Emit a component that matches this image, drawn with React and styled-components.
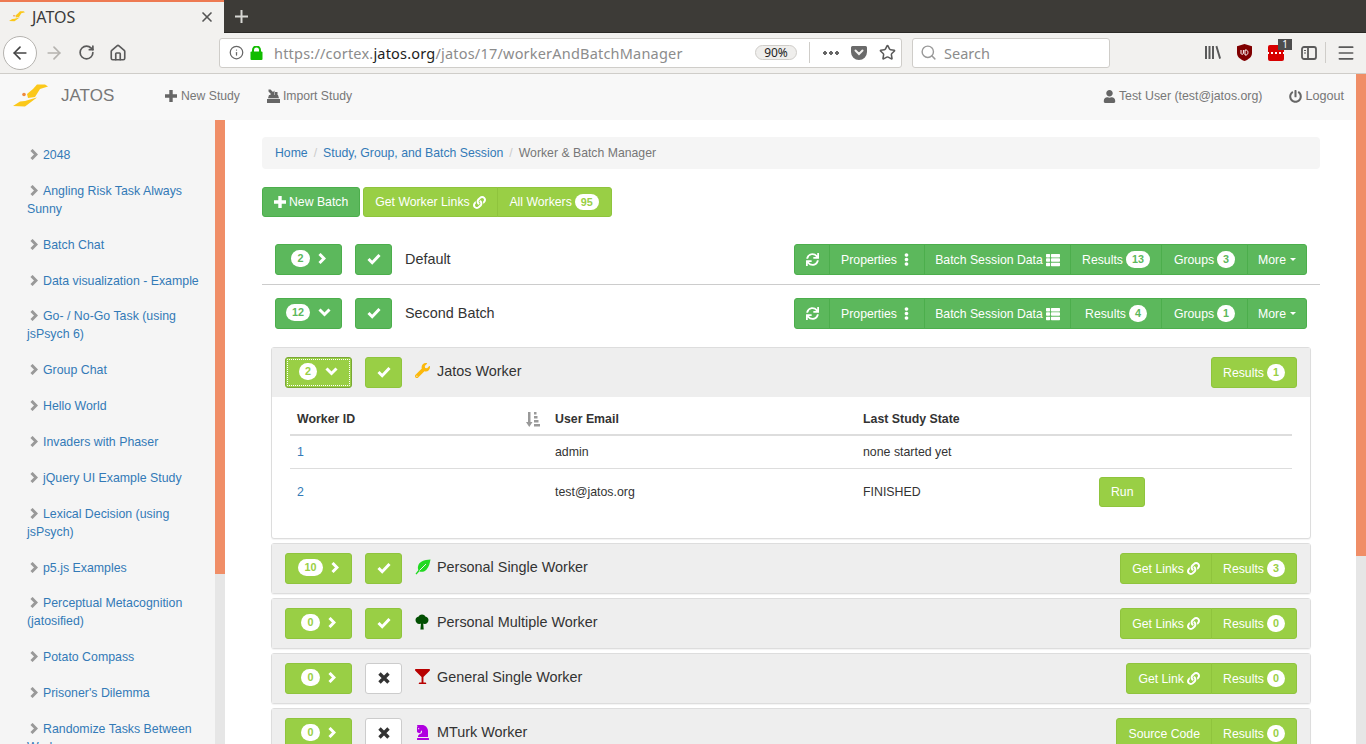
import React from 'react';
import styled, { createGlobalStyle } from 'styled-components';
import { FaLink, FaSync, FaEllipsisV, FaThList, FaWrench, FaGlassMartini, FaChessKnight, FaUser, FaPowerOff } from 'react-icons/fa';
import { ArrowLeft, ArrowRight, RotateCw, House, Info, Star, Search, X, Menu } from 'lucide-react';

const GREEN = '#5cb85c';
const LIME = '#99cf45';

const GlobalStyle = createGlobalStyle`
  html, body { margin: 0; padding: 0; height: 100%; overflow: hidden; }
  body { font-family: "Liberation Sans", Arial, sans-serif; font-size: 12.35px; color: #333; background: #fff; }
  * { box-sizing: border-box; }
`;

const studies = [
  '2048', 'Angling Risk Task Always Sunny', 'Batch Chat', 'Data visualization - Example',
  'Go- / No-Go Task (using jsPsych 6)', 'Group Chat', 'Hello World', 'Invaders with Phaser',
  'jQuery UI Example Study', 'Lexical Decision (using jsPsych)', 'p5.js Examples',
  'Perceptual Metacognition (jatosified)', 'Potato Compass', "Prisoner's Dilemma",
  'Randomize Tasks Between Workers',
];

function Logo({ size = 35 }) {
  return (
    <svg width={size} height={size * 0.66} viewBox="0 0 35 23">
      <path d="M0 22 L7 17.500 L12 17 L22 14 L24 13.500 L12 22.500 Z" fill="#fbc81a" />
      <path d="M14 10 L20 5 L24 .5 L32 .5 L35 2.500 L27 5 L22 13 L15 14 Z" fill="#fbc81a" />
      <circle cx="11" cy="10.500" r="1.800" fill="#ef8a3c" />
    </svg>
  );
}

function ChevronRight({ color = 'currentColor' }) {
  return (
    <svg width="8" height="11" viewBox="0 0 8 11" fill="none" stroke={color} strokeWidth="3">
      <path d="M1.500 1 6 5.500 1.500 10" />
    </svg>
  );
}

function ChevronDown() {
  return (
    <svg width="13" height="9" viewBox="0 0 13 9" fill="none" stroke="currentColor" strokeWidth="3">
      <path d="M1.500 1.500 6.500 6.500 11.500 1.500" />
    </svg>
  );
}

function CheckMark() {
  return (
    <svg width="14" height="12" viewBox="0 0 14 12" fill="none" stroke="currentColor" strokeWidth="3">
      <path d="M1.500 6 5.200 9.700 12.500 2" />
    </svg>
  );
}

function CrossMark() {
  return (
    <svg width="12" height="12" viewBox="0 0 12 12" fill="none" stroke="currentColor" strokeWidth="3.400">
      <path d="M1.500 1.500 10.500 10.500M10.500 1.500 1.500 10.500" />
    </svg>
  );
}

function PlusMark({ size = 12 }) {
  return (
    <svg width={size} height={size} viewBox="0 0 12 12" fill="currentColor">
      <path d="M4.300 0h3.400v4.300H12v3.400H7.700V12H4.300V7.700H0V4.300h4.300z" />
    </svg>
  );
}

function TreeIcon() {
  return (
    <svg width="14" height="16" viewBox="0 0 14 16">
      <path d="M6 9h2.200l.5 6.500H5.400z" fill="#024f02" />
      <path d="M7 .5c2 0 3 1 3.300 2 1.900.3 3.200 1.700 3.200 3.500 0 2.200-1.600 4-3.800 4-.9 0-1.900-.4-2.700-1-.8.6-1.800 1-2.700 1C2.100 10 .5 8.200.5 6c0-1.800 1.300-3.200 3.200-3.500C4 1.500 5 .5 7 .5z" fill="#024f02" />
    </svg>
  );
}

function LeafIcon() {
  return (
    <svg width="16" height="16" viewBox="0 0 16 16">
      <path d="M15.500 .5C9 1 4 2.500 3 7.500c-.3 1.500 0 2.800.4 3.600L.5 14.800l1 .8 2.900-3.400c1.500 1 4.500 1 7-1.500 2.800-2.800 3.500-7 4.100-10.200z" fill="#22d922" />
      <path d="M4.500 11.500 11 5" stroke="#eee" strokeWidth="1" fill="none" />
    </svg>
  );
}

function ImportIcon() {
  return (
    <svg width="13" height="14" viewBox="0 0 13 14" fill="#666">
      <path d="M0 10h13v4H0z" />
      <path d="M2 6h9l1 3.200H1z" />
      <path d="M1.500 .5l2 0 2.500 2.500 1.500-1.500v5h-5l1.500-1.500L1.500 2.500z" />
      <path d="M8 3h2.500v3H8z" />
    </svg>
  );
}

function SortBarsIcon() {
  return (
    <svg width="14" height="15" viewBox="0 0 14 15" fill="#999">
      <path d="M2 0h2.500v10H6.500L3.250 15 0 10h2z" />
      <path d="M8 0h2.500v2.500H8zM8 4h3.500v2.500H8zM8 8h4.500v2.500H8zM8 12h6v2.500H8z" />
    </svg>
  );
}

function LockIcon() {
  return (
    <svg width="13" height="14" viewBox="0 0 13 14">
      <path d="M3 6V4a3.500 3.500 0 0 1 7 0v2" fill="none" stroke="#12bc00" strokeWidth="2" />
      <rect x="0.500" y="5.500" width="12" height="8.500" rx="1" fill="#12bc00" />
    </svg>
  );
}

function PocketIcon() {
  return (
    <svg width="16" height="15" viewBox="0 0 16 15">
      <path d="M1.500 1h13A1.500 1.500 0 0 1 16 2.500V7a8 8 0 0 1-16 0V2.500A1.500 1.500 0 0 1 1.500 1z" fill="#6a6a6a" />
      <path d="M4.500 5.500 8 9l3.500-3.500" fill="none" stroke="#f2f1ef" strokeWidth="2" strokeLinecap="round" />
    </svg>
  );
}

function LibraryIcon() {
  return (
    <svg width="16" height="15" viewBox="0 0 16 15" fill="#5a5a5a">
      <path d="M0 1h2v13H0zM3.500 1h2v13h-2zM7 1h2v13H7zM10.500 1.500l1.800-.7 3.700 12.500-1.800.7z" />
    </svg>
  );
}

function ShieldIcon() {
  return (
    <svg width="15" height="17" viewBox="0 0 15 17">
      <path d="M7.500 0 15 2.200V9c0 4-3.500 6.500-7.500 8C3.500 15.500 0 13 0 9V2.200z" fill="#800000" />
      <path d="M4 6v3.500c0 1 2.400 1 2.400 0V6M8 6v5h1c2.600 0 2.600-5 0-5z" fill="none" stroke="#fff" strokeWidth="1" />
    </svg>
  );
}

function SidebarToggleIcon() {
  return (
    <svg width="16" height="14" viewBox="0 0 16 14" fill="none" stroke="#5a5a5a" strokeWidth="1.800">
      <rect x="1" y="1" width="14" height="12" rx="2" />
      <path d="M7 1v12" />
      <path d="M3 4.500h2M3 7h2" strokeWidth="1.200" />
    </svg>
  );
}

function PlusGlyph() {
  return (
    <svg width="15" height="15" viewBox="0 0 15 15" stroke="currentColor" strokeWidth="2">
      <path d="M7.500 1v13M1 7.500h13" />
    </svg>
  );
}

const Page = styled.div`
  height: 744px;
  display: flex;
  flex-direction: column;
  overflow: hidden;
`;

/* browser chrome */
const TabStrip = styled.div`
  height: 33px;
  flex: none;
  display: flex;
  background: #3d3b37;
  border-bottom: 1px solid #2a2926;
`;

const Tab = styled.div`
  width: 224px;
  height: 33px;
  display: flex;
  align-items: center;
  padding: 0 9px 2px;
  gap: 7px;
  background: #f2f1ef;
  border-top: 2px solid #ee7a52;
  font-family: "Noto Sans", sans-serif;
  font-size: 16px;
  color: #3a3a3a;
`;

const TabTitle = styled.span`
  flex: 1;
`;

const NewTab = styled.div`
  width: 34px;
  display: flex;
  align-items: center;
  justify-content: center;
  color: #d8d8d4;
`;

const Toolbar = styled.div`
  height: 41px;
  flex: none;
  display: flex;
  align-items: center;
  padding: 0 0 1px 3px;
  background: #f2f1ef;
  border-bottom: 1px solid #cfcdc9;
  font-family: "Noto Sans", sans-serif;
`;

const BackButton = styled.div`
  width: 34px;
  height: 34px;
  border-radius: 50%;
  border: 1px solid #b5b3af;
  background: #fff;
  display: flex;
  align-items: center;
  justify-content: center;
  color: #444;
`;

const ToolButton = styled.div`
  width: ${p => p.$w || 32}px;
  display: flex;
  align-items: center;
  justify-content: center;
  color: ${p => p.$dim ? '#b5b3af' : '#5a5a5a'};
  position: relative;
`;

const NavIcons = styled.div`
  display: flex;
  width: 182px;
`;

const UrlBar = styled.div`
  width: 683px;
  height: 30px;
  display: flex;
  align-items: center;
  padding: 0 2px 0 9px;
  background: #fff;
  border: 1px solid #cfcdc9;
  border-radius: 3px;
`;

const LockSlot = styled.span`
  display: flex;
  margin: 0 11px 0 6px;
  flex: none;
`;

const UrlText = styled.span`
  flex: 1;
  font-size: 14.5px;
  color: #8c8c8c;
  letter-spacing: 0.2px;
  white-space: nowrap;
  b { font-weight: 400; color: #222; }
`;

const ZoomPill = styled.span`
  width: 42px;
  height: 15px;
  margin-right: 12px;
  border: 1px solid #cfcdc9;
  border-radius: 8px;
  background: #efeeec;
  font-size: 12px;
  line-height: 13px;
  text-align: center;
  color: #222;
`;

const Divider = styled.span`
  width: 1px;
  height: 21px;
  background: #cfcdc9;
  flex: none;
`;

const Dots = styled.span`
  width: 16px;
  height: 4px;
  margin: 0 4px 0 13px;
  flex: none;
  background: radial-gradient(circle at 2px 2px, #666 1.800px, transparent 2px) 0 0 / 6px 4px repeat-x;
`;

const SearchBar = styled.div`
  width: 198px;
  height: 30px;
  margin-left: 10px;
  display: flex;
  align-items: center;
  gap: 7px;
  padding-left: 7px;
  background: #fff;
  border: 1px solid #cfcdc9;
  border-radius: 3px;
  font-size: 14.500px;
  color: #8c8c8c;
`;

const ToolRight = styled.div`
  display: flex;
  align-items: center;
  margin-left: 87px;
`;

const RedBox = styled.div`
  width: 16px;
  height: 16px;
  background: #d70000;
  border-radius: 2px;
  position: relative;
  background-image: radial-gradient(circle at 2px 2px, #fff 1.300px, transparent 1.500px);
  background-size: 4px 4px;
  background-repeat: repeat-x;
  background-position: 2px 6px;
`;

const CountBadge = styled.span`
  position: absolute;
  top: -6px;
  left: 10px;
  width: 14px;
  height: 11px;
  background: #4d4d4d;
  color: #fff;
  font-size: 10px;
  line-height: 11px;
  text-align: center;
`;

/* app */
const Body = styled.div`
  flex: 1;
  min-height: 0;
  display: flex;
`;

const Viewport = styled.div`
  flex: 1;
  min-width: 0;
  display: flex;
  flex-direction: column;
`;

const Navbar = styled.div`
  height: 46px;
  flex: none;
  display: flex;
  align-items: center;
  background: #f8f8f8;
  color: #777;
  font-size: 12.2px;
  padding: 0 12px 2px 13px;
`;

const Brand = styled.div`
  width: 152px;
  display: flex;
  align-items: center;
  gap: 13px;
  font-size: 17px;
`;

const NavLink = styled.div`
  display: flex;
  align-items: center;
  gap: ${p => p.$gap || 3}px;
  font-size: ${p => p.$fs || 12.2}px;
  margin-right: ${p => p.$mr || 0}px;
  svg { color: #666; }
`;

const Spacer = styled.div`
  flex: 1;
`;

const Columns = styled.div`
  flex: 1;
  min-height: 0;
  display: flex;
`;

const Sidebar = styled.div`
  width: 215px;
  flex: none;
  padding: 26px 10px 0 27px;
  background: #f5f5f5;
  overflow: hidden;
`;

const StudyItem = styled.div`
  line-height: 18px;
  margin-bottom: 17.860px;
  color: #337ab7;
  svg { margin: 0 5px 0 3px; vertical-align: -1px; }
`;

const Track = styled.div`
  width: 10px;
  flex: none;
  background: #e6e6e6;
`;

const Thumb = styled.div`
  height: ${p => p.$h}px;
  background: #f08e67;
`;

const Main = styled.div`
  flex: 1;
  min-width: 0;
  padding: 17px 36px 0 37px;
  overflow: hidden;
`;

const Breadcrumb = styled.div`
  height: 32px;
  display: flex;
  align-items: center;
  padding: 0 13px;
  background: #f5f5f5;
  border-radius: 4px;
  font-size: 12.25px;
  color: #777;
`;

const Crumb = styled.span`
  color: #337ab7;
`;

const Slash = styled.span`
  color: #ccc;
  padding: 0 6px;
`;

const ActionRow = styled.div`
  display: flex;
  gap: 3px;
  margin: 18px 0 14px;
`;

const Group = styled.div`
  display: inline-flex;
`;

const Btn = styled.div`
  height: ${p => p.$h || 31}px;
  min-width: ${p => p.$min || 0}px;
  display: inline-flex;
  align-items: center;
  justify-content: center;
  gap: ${p => p.$gap || 3}px;
  padding: 0 ${p => p.$pad ?? 11}px;
  color: #fff;
  font-size: 12.25px;
  white-space: nowrap;
  background: ${p => p.$lime ? LIME : GREEN};
  border: 1px solid ${p => p.$lime ? '#8fc43d' : '#4cae4c'};
  border-radius: 3px;
  ${Group} > & {
    border-radius: 0;
    margin-left: -1px;
  }
  ${Group} > &:first-child {
    border-radius: 3px 0 0 3px;
    margin-left: 0;
  }
  ${Group} > &:last-child {
    border-radius: 0 3px 3px 0;
  }
`;

const Badge = styled.span`
  display: inline-block;
  padding: 3px 6px;
  min-width: 18px;
  border-radius: 9px;
  background: #fff;
  color: ${p => p.$lime ? LIME : GREEN};
  font-size: 10.800px;
  font-weight: 700;
  line-height: 1;
  text-align: center;
`;

const Toggle = styled(Btn)`
  width: 67px;
  padding: 0 0 2px;
  gap: 8px;
  flex: none;
  ${p => p.$focus && 'outline: 1px dotted #fff; outline-offset: -3px; border-color: #7aa836;'}
`;

const CheckBtn = styled(Btn)`
  width: 37px;
  padding: 0 0 2px;
  flex: none;
  ${p => p.$off && 'background: #fff; border-color: #ccc; color: #333;'}
`;

const BatchRow = styled.div`
  height: ${p => p.$h}px;
  display: flex;
  align-items: flex-start;
  padding: 13px 13px 0;
  border-bottom: ${p => p.$line ? '1px solid #ccc' : 'none'};
`;

const RowLabel = styled.div`
  flex: 1;
  font-size: 14.400px;
  line-height: 30px;
  margin-left: 13px;
  color: #333;
`;

const CheckSlot = styled.div`
  margin-left: 13px;
`;

const Panel = styled.div`
  margin: 0 9px 4px;
  background: #fff;
  border: 1px solid #ddd;
  border-radius: 3px;
  box-shadow: 0 1px 1px rgba(0,0,0,.05);
`;

const PanelHead = styled.div`
  height: 49px;
  display: flex;
  align-items: flex-start;
  padding: 9px 13px 0;
  background: #eee;
`;

const TypeIcon = styled.span`
  width: 22px;
  margin-left: 13px;
  height: 27px;
  flex: none;
  display: flex;
  align-items: center;
  color: ${p => p.$color};
`;

const PanelTitle = styled.div`
  flex: 1;
  font-size: 14.400px;
  line-height: 29px;
  color: #333;
`;

const PanelBody = styled.div`
  padding: 3px 18px 24px;
`;

const Table = styled.table`
  width: 1002px;
  border-collapse: collapse;
  table-layout: fixed;
`;

const Th = styled.th`
  width: ${p => p.$w ? p.$w + 'px' : 'auto'};
  height: 35px;
  padding: 4px 7px 0;
  text-align: left;
  font-weight: 700;
  border-bottom: 2px solid #ddd;
`;

const SortIcon = styled.span`
  float: right;
  height: 0;
  margin-right: 1px;
  svg { display: block; }
`;

const Td = styled.td`
  height: ${p => p.$h}px;
  padding: ${p => p.$pt || 0}px 7px 0;
  color: ${p => p.$link ? '#337ab7' : '#333'};
  border-bottom: ${p => p.$last ? 'none' : '1px solid #ddd'};
`;

const Caret = styled.span`
  width: 0;
  height: 0;
  border-top: 3.600px solid #fff;
  border-left: 3.600px solid transparent;
  border-right: 3.600px solid transparent;
`;

const workerPanels = [
  { count: 10, on: true, label: 'Personal Single Worker', color: '#22d922', icon: <LeafIcon />, left: 'Get Links', leftW: 91, link: true, results: 3 },
  { count: 0, on: true, label: 'Personal Multiple Worker', color: '#024f02', icon: <TreeIcon />, left: 'Get Links', leftW: 91, link: true, results: 0 },
  { count: 0, on: false, label: 'General Single Worker', color: '#b80000', icon: <FaGlassMartini size={15} />, left: 'Get Link', leftW: 85, link: true, results: 0 },
  { count: 0, on: false, label: 'MTurk Worker', color: '#b000e0', icon: <FaChessKnight size={16} />, left: 'Source Code', leftW: 95, results: 0 },
];

function BatchBar({ results, groups }) {
  return (
    <Group>
      <Btn $pad={0} $min={36}><FaSync size={13} /></Btn>
      <Btn $pad={0} $min={96}>Properties <FaEllipsisV size={13} /></Btn>
      <Btn $pad={0} $min={147}>Batch Session Data <FaThList size={14} /></Btn>
      <Btn $pad={0} $min={92}>Results <Badge>{results}</Badge></Btn>
      <Btn $pad={0} $min={87}>Groups <Badge>{groups}</Badge></Btn>
      <Btn $pad={0} $min={60} $gap={4}>More <Caret /></Btn>
    </Group>
  );
}

export default function App() {
  return (
    <Page>
      <GlobalStyle />
      <TabStrip>
        <Tab>
          <Logo size={16} />
          <TabTitle>JATOS</TabTitle>
          <X size={16} color="#555" strokeWidth={2.500} />
        </Tab>
        <NewTab><PlusGlyph /></NewTab>
      </TabStrip>
      <Toolbar>
        <BackButton><ArrowLeft size={20} strokeWidth={2} /></BackButton>
        <NavIcons>
          <ToolButton $dim $w={33}><ArrowRight size={20} /></ToolButton>
          <ToolButton $w={32}><RotateCw size={17} strokeWidth={2.400} /></ToolButton>
          <ToolButton $w={32}><House size={18} strokeWidth={2.200} /></ToolButton>
        </NavIcons>
        <UrlBar>
          <Info size={15} color="#666" />
          <LockSlot><LockIcon /></LockSlot>
          <UrlText>https://cortex.<b>jatos.org</b>/jatos/17/workerAndBatchManager</UrlText>
          <ZoomPill>90%</ZoomPill>
          <Divider />
          <Dots />
          <ToolButton $w={32}><PocketIcon /></ToolButton>
          <ToolButton $w={24}><Star size={17} strokeWidth={2.200} /></ToolButton>
        </UrlBar>
        <SearchBar><Search size={17} strokeWidth={2} color="#999" />Search</SearchBar>
        <ToolRight>
          <ToolButton $w={32}><LibraryIcon /></ToolButton>
          <ToolButton $w={31}><ShieldIcon /></ToolButton>
          <ToolButton $w={32}><RedBox><CountBadge>1</CountBadge></RedBox></ToolButton>
          <ToolButton $w={33}><SidebarToggleIcon /></ToolButton>
          <Divider />
          <ToolButton $w={39}><Menu size={20} strokeWidth={2} /></ToolButton>
        </ToolRight>
      </Toolbar>
      <Body>
        <Viewport>
          <Navbar>
            <Brand><Logo />JATOS</Brand>
            <NavLink $mr={27} $gap={4}><PlusMark />New Study</NavLink>
            <NavLink><ImportIcon />Import Study</NavLink>
            <Spacer />
            <NavLink $mr={27} $fs={12.35}><FaUser size={13} />Test User (test@jatos.org)</NavLink>
            <NavLink $fs={12.6}><FaPowerOff size={13} />Logout</NavLink>
          </Navbar>
          <Columns>
            <Sidebar>
              {studies.map(name => (
                <StudyItem key={name}><ChevronRight color="#999" />{name}</StudyItem>
              ))}
            </Sidebar>
            <Track><Thumb $h={454} /></Track>
            <Main>
              <Breadcrumb>
                <Crumb>Home</Crumb><Slash>/</Slash>
                <Crumb>Study, Group, and Batch Session</Crumb><Slash>/</Slash>
                Worker &amp; Batch Manager
              </Breadcrumb>
              <ActionRow>
                <Btn $h={30}><PlusMark />New Batch</Btn>
                <Group>
                  <Btn $lime $h={30}>Get Worker Links <FaLink size={13} /></Btn>
                  <Btn $lime $h={30} $min={115}>All Workers <Badge $lime>95</Badge></Btn>
                </Group>
              </ActionRow>

              <BatchRow $h={54} $line>
                <Toggle><Badge>2</Badge><ChevronRight /></Toggle>
                <CheckSlot><CheckBtn><CheckMark /></CheckBtn></CheckSlot>
                <RowLabel>Default</RowLabel>
                <BatchBar results={13} groups={3} />
              </BatchRow>
              <BatchRow $h={62}>
                <Toggle><Badge>12</Badge><ChevronDown /></Toggle>
                <CheckSlot><CheckBtn><CheckMark /></CheckBtn></CheckSlot>
                <RowLabel>Second Batch</RowLabel>
                <BatchBar results={4} groups={1} />
              </BatchRow>

              <Panel>
                <PanelHead>
                  <Toggle $lime $focus><Badge $lime>2</Badge><ChevronDown /></Toggle>
                  <CheckSlot><CheckBtn $lime><CheckMark /></CheckBtn></CheckSlot>
                  <TypeIcon $color="#fbb80b"><FaWrench size={15} /></TypeIcon>
                  <PanelTitle>Jatos Worker</PanelTitle>
                  <Btn $lime $min={86}>Results <Badge $lime>1</Badge></Btn>
                </PanelHead>
                <PanelBody>
                  <Table>
                    <thead>
                      <tr>
                        <Th $w={258}>Worker ID<SortIcon><SortBarsIcon /></SortIcon></Th>
                        <Th $w={308}>User Email</Th>
                        <Th $w={236}>Last Study State</Th>
                        <Th />
                      </tr>
                    </thead>
                    <tbody>
                      <tr>
                        <Td $h={33} $link>1</Td>
                        <Td $h={33}>admin</Td>
                        <Td $h={33}>none started yet</Td>
                        <Td $h={33} />
                      </tr>
                      <tr>
                        <Td $h={46} $pt={2} $link $last>2</Td>
                        <Td $h={46} $pt={2} $last>test@jatos.org</Td>
                        <Td $h={46} $pt={2} $last>FINISHED</Td>
                        <Td $h={46} $pt={2} $last><Btn $lime $h={30}>Run</Btn></Td>
                      </tr>
                    </tbody>
                  </Table>
                </PanelBody>
              </Panel>

              {workerPanels.map(w => (
                <Panel key={w.label}>
                  <PanelHead>
                    <Toggle $lime>
                      <Badge $lime>{w.count}</Badge>
                      <ChevronRight />
                    </Toggle>
                    <CheckSlot>
                      <CheckBtn $lime $off={!w.on}>
                        {w.on ? <CheckMark /> : <CrossMark />}
                      </CheckBtn>
                    </CheckSlot>
                    <TypeIcon $color={w.color}>{w.icon}</TypeIcon>
                    <PanelTitle>{w.label}</PanelTitle>
                    <Group>
                      <Btn $lime $min={w.leftW}>{w.left}{w.link && <FaLink size={13} />}</Btn>
                      <Btn $lime $min={86}>Results <Badge $lime>{w.results}</Badge></Btn>
                    </Group>
                  </PanelHead>
                </Panel>
              ))}
            </Main>
          </Columns>
        </Viewport>
        <Track><Thumb $h={482} /></Track>
      </Body>
    </Page>
  );
}
